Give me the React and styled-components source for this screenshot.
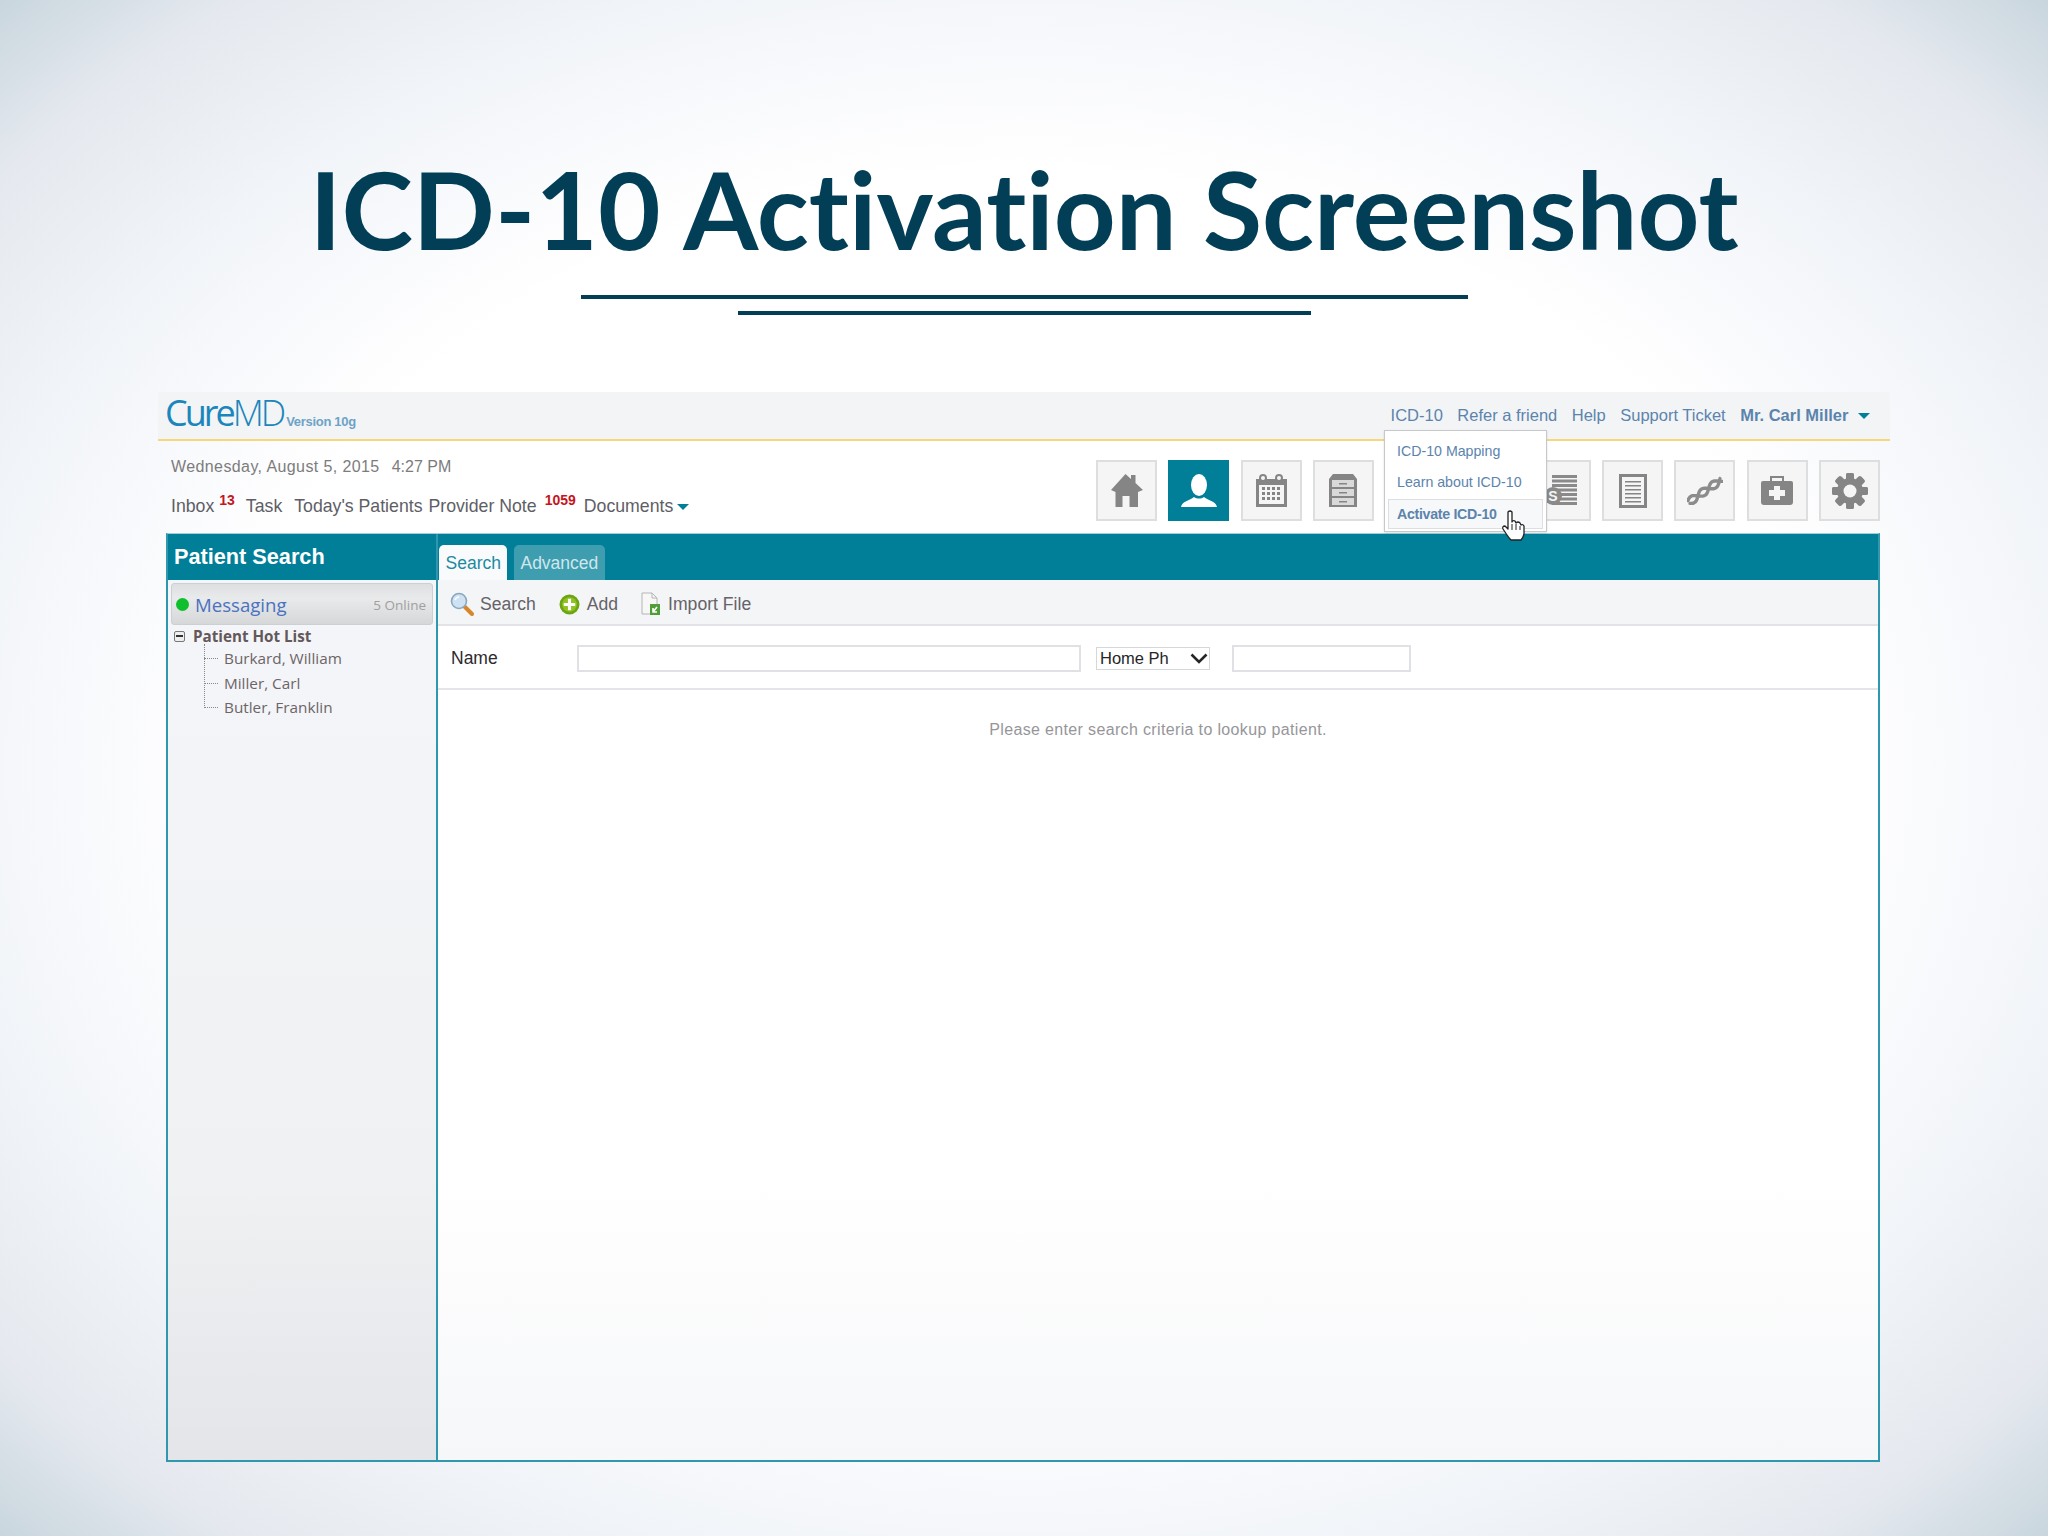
import React from 'react';
import styled, { createGlobalStyle } from 'styled-components';

const teal = '#027f98';
const iconGray = '#858585';
const linkBlue = '#5b84ad';

const GlobalStyle = createGlobalStyle`
    html, body {
        margin: 0;
        padding: 0;
    }
    body {
        font-family: "Liberation Sans", Arial, sans-serif;
        background: #fff;
    }
`;

const Page = styled.div`
    width: 2048px;
    height: 1536px;
    overflow: hidden;
    display: flex;
    flex-direction: column;
    background: radial-gradient(ellipse farthest-corner at 50% 50%, #ffffff 55%, #f8f9fc 66%, #eff3f7 77%, #e5e9ef 89%, #c9d6de 100%);
`;

const Title = styled.h1`
    margin: 0;
    padding: 143px 0 0 0;
    height: 133px;
    text-align: center;
    font-family: Lato, sans-serif;
    font-weight: 700;
    font-size: 108px;
    line-height: 130px;
    font-variant-ligatures: none;
    color: #023e56;
`;

const Rules = styled.div`
    display: flex;
    flex-direction: column;
    align-items: center;
    gap: 12px;
    margin-top: 19px;
`;

const Rule = styled.div`
    width: ${props => props.$width}px;
    height: 4px;
    background: #023e56;
`;

const Frame = styled.div`
    position: relative;
    width: 1732px;
    height: 1070px;
    margin: 77px 0 0 158px;
    display: flex;
    flex-direction: column;
`;

const TopStrip = styled.div`
    height: 47px;
    flex: none;
    display: flex;
    align-items: center;
    justify-content: space-between;
    padding: 0 20px 0 7px;
    background: #f3f4f6;
    border-bottom: 2px solid #f6d77c;
`;

const Logo = styled.div`
    display: flex;
    align-items: baseline;
    padding-top: 2px;
    color: #1b86bc;
    font-family: "Open Sans", sans-serif;
    font-size: 36px;
    line-height: 47px;
    letter-spacing: -3px;
`;

const LogoBold = styled.span`
    font-weight: 500;
`;

const LogoThin = styled.span`
    font-weight: 300;
    letter-spacing: -3px;
`;

const LogoVersion = styled.span`
    margin-left: 3px;
    font-family: "Liberation Sans", sans-serif;
    font-size: 13px;
    letter-spacing: -0.3px;
    font-weight: 700;
    color: #6da3c6;
`;

const TopLinks = styled.div`
    display: flex;
    align-items: center;
    gap: 14.5px;
    font-size: 16.5px;
    color: ${linkBlue};
`;

const TopLink = styled.span`
    font-weight: ${props => (props.$bold ? 700 : 400)};
`;

const Caret = styled.span`
    display: inline-block;
    width: 0;
    height: 0;
    margin-left: ${props => props.$gap ?? 0}px;
    border-left: 6px solid transparent;
    border-right: 6px solid transparent;
    border-top: 6px solid ${teal};
    vertical-align: 2px;
`;

const InfoRow = styled.div`
    height: 92px;
    flex: none;
    display: flex;
    justify-content: space-between;
    padding: 0 10px 0 13px;
`;

const InfoLeft = styled.div`
    display: flex;
    flex-direction: column;
    padding-top: 16px;
`;

const DateLine = styled.div`
    display: flex;
    gap: 12px;
    font-size: 16px;
    line-height: 20px;
    color: #7c7c7c;
`;

const DatePart = styled.span`
    letter-spacing: 0.4px;
`;

const NavLine = styled.div`
    display: flex;
    align-items: baseline;
    margin-top: 18px;
    font-size: 17.7px;
    line-height: 22px;
    color: #5e5e66;
`;

const NavItem = styled.span`
    margin-right: ${props => props.$gap ?? 6}px;
`;

const Count = styled.span`
    align-self: flex-start;
    margin: -3px ${props => props.$after}px 0 ${props => props.$before}px;
    font-size: 14px;
    font-weight: 700;
    line-height: 16px;
    color: #c4161c;
`;

const IconRow = styled.div`
    display: flex;
    gap: 11.3px;
    padding-top: 19px;
`;

const IconBox = styled.div`
    width: 61px;
    height: 61px;
    box-sizing: border-box;
    display: flex;
    align-items: center;
    justify-content: center;
    background: ${props => (props.$active ? teal : '#f5f5f6')};
    border: 2px solid ${props => (props.$active ? teal : '#dddee0')};
`;

const Panel = styled.div`
    flex: none;
    margin: 0 10px 0 8px;
    height: 929px;
    box-sizing: border-box;
    display: grid;
    grid-template-columns: 270px 1fr;
    border: 2px solid #2f97ae;
    border-top: 1px solid #9fd0dc;
    background: #fff;
`;

const Sidebar = styled.div`
    display: flex;
    flex-direction: column;
    border-right: 2px solid #2f97ae;
    background: linear-gradient(180deg, #f4f6f9 0%, #f0f1f3 70%, #e3e5e8 100%);
`;

const SideTitle = styled.div`
    height: 46px;
    flex: none;
    padding-left: 6px;
    background: ${teal};
    color: #fff;
    font-size: 21.7px;
    font-weight: 700;
    line-height: 46px;
`;

const Messaging = styled.div`
    height: 42px;
    flex: none;
    margin: 3px 3px 0 3px;
    padding: 1px 6px 0 4px;
    display: flex;
    align-items: center;
    border-radius: 3px;
    background: linear-gradient(180deg, #dddfe0 0%, #e9eaeb 35%, #d5d7d8 100%);
    border: 1px solid #cdd0d2;
    box-sizing: border-box;
`;

const Dot = styled.span`
    width: 13px;
    height: 13px;
    border-radius: 50%;
    background: #0fbf2c;
`;

const MessagingLabel = styled.span`
    margin-left: 6px;
    flex: 1;
    font-family: "Open Sans", sans-serif;
    font-size: 18.6px;
    color: #4a72c0;
`;

const OnlineCount = styled.span`
    font-family: "Open Sans", sans-serif;
    font-size: 13.5px;
    color: #a0a0a0;
`;

const TreeRoot = styled.div`
    position: relative;
    margin-top: 1px;
    padding-left: 25px;
    font-family: "Open Sans", sans-serif;
    font-weight: 700;
    font-size: 15.2px;
    line-height: 21px;
    color: #63585a;
`;

const TreeToggle = styled.span`
    position: absolute;
    left: 6px;
    top: 5px;
    width: 11px;
    height: 11px;
    box-sizing: border-box;
    border: 1px solid #777;
    border-radius: 2px;
    background: #eee;
    &::after {
        content: '';
        position: absolute;
        left: 1px;
        right: 1px;
        top: 3px;
        height: 2px;
        background: #333;
    }
`;

const TreeList = styled.div`
    position: relative;
    display: flex;
    flex-direction: column;
    margin: -1px 0 0 36px;
    padding-left: 20px;
    &::before {
        content: '';
        position: absolute;
        left: 0;
        top: -2px;
        bottom: 12px;
        border-left: 1px dotted #888;
    }
`;

const TreeItem = styled.div`
    position: relative;
    height: 24.5px;
    font-family: "Open Sans", sans-serif;
    font-size: 15.3px;
    line-height: 24px;
    color: #6c6468;
    &::before {
        content: '';
        position: absolute;
        left: -20px;
        top: 12px;
        width: 14px;
        border-top: 1px dotted #888;
    }
`;

const Main = styled.div`
    display: flex;
    flex-direction: column;
    background: linear-gradient(180deg, #ffffff 0%, #ffffff 70%, #f6f7f9 100%);
`;

const TabBar = styled.div`
    height: 46px;
    flex: none;
    display: flex;
    align-items: flex-end;
    gap: 6.5px;
    padding-left: 1px;
    background: ${teal};
`;

const Tab = styled.div`
    height: 35px;
    padding: 0 6.5px;
    border-radius: 5px 5px 0 0;
    font-size: 17.5px;
    line-height: 37px;
    color: ${props => (props.$active ? '#1d8aa2' : '#cfe7ec')};
    background: ${props => (props.$active ? '#f8fafb' : '#3f9db0')};
`;

const Toolbar = styled.div`
    height: 46px;
    flex: none;
    box-sizing: border-box;
    display: flex;
    align-items: center;
    padding: 4px 0 0 12px;
    background: #f3f5f7;
    border-bottom: 2px solid #e1e3e6;
`;

const ToolButton = styled.div`
    display: flex;
    align-items: center;
    gap: ${props => props.$gap ?? 7}px;
    margin-right: 23px;
    font-size: 17.6px;
    color: #666269;
`;

const FormRow = styled.div`
    height: 64px;
    flex: none;
    box-sizing: border-box;
    display: flex;
    align-items: center;
    padding: 3px 0 0 13px;
    border-bottom: 2px solid #e4e5e8;
`;

const FieldLabel = styled.label`
    width: 126px;
    font-size: 17.5px;
    color: #2d2a30;
`;

const TextField = styled.input`
    width: ${props => props.$width}px;
    height: 27px;
    padding: 0;
    box-sizing: border-box;
    background: #fff;
    border: 2px solid #e0e1e4;
`;

const PhoneSelect = styled.div`
    width: 114px;
    height: 23px;
    margin: 0 22px 0 15px;
    padding: 0 1px 0 3px;
    box-sizing: border-box;
    display: flex;
    align-items: center;
    justify-content: space-between;
    font-size: 16.5px;
    color: #26262a;
    border: 1px solid #d6d7da;
    background: #fff;
`;

const Hint = styled.div`
    margin-top: 30px;
    text-align: center;
    font-size: 16px;
    line-height: 20px;
    color: #96969a;
    letter-spacing: 0.35px;
`;

const Dropdown = styled.div`
    position: absolute;
    left: 1226px;
    top: 38px;
    width: 163px;
    height: 102px;
    box-sizing: border-box;
    padding: 5px 3px 4px;
    display: flex;
    flex-direction: column;
    background: #fff;
    border: 1px solid #c6c8cb;
    box-shadow: 0 1px 2px rgba(0, 0, 0, 0.12);
`;

const DropItem = styled.div`
    flex: none;
    height: ${props => (props.$hover ? 30 : 31)}px;
    margin-top: ${props => (props.$hover ? 1 : 0)}px;
    padding-left: ${props => (props.$hover ? 8 : 9)}px;
    box-sizing: border-box;
    font-size: 14.2px;
    letter-spacing: ${props => (props.$hover ? -0.3 : 0)}px;
    line-height: ${props => (props.$hover ? 28 : 31)}px;
    font-weight: ${props => (props.$hover ? 700 : 400)};
    color: ${linkBlue};
    background: ${props => (props.$hover ? '#f7f8f9' : 'transparent')};
    border: ${props => (props.$hover ? '1px solid #dcdee0' : '0')};
`;

const HandCursor = styled.svg`
    position: absolute;
    left: 1344px;
    top: 118px;
`;

const HomeIcon = () => (
    <svg width="32" height="33" viewBox="0 0 32 33">
        <path fill={iconGray} d="M14.5 0 L20 5 V1 H24.5 V9 L32 16 L27 18 V33 H18.5 V22 H11.5 V33 H4.5 V18 L0 16 Z" />
    </svg>
);

const PersonIcon = () => (
    <svg width="36" height="34" viewBox="0 0 36 34">
        <ellipse cx="18" cy="11" rx="8" ry="11" fill="#fff" />
        <path fill="#fff" d="M0 33 C1 27 10 26 13 23 C16 25 20 25 23 23 C26 26 35 27 36 33 Z" />
    </svg>
);

const CalendarIcon = () => (
    <svg width="32" height="34" viewBox="0 0 32 34">
        <path fill={iconGray} d="M1 5 H32 V33 H1 Z" />
        <rect x="4" y="11" width="25" height="19" fill="#f5f5f6" />
        <circle cx="8" cy="4" r="3" fill="#f5f5f6" stroke={iconGray} strokeWidth="2" />
        <circle cx="24" cy="4" r="3" fill="#f5f5f6" stroke={iconGray} strokeWidth="2" />
        {[13, 18, 23].map(y => [7, 12, 17, 22].map(x => (
            <rect key={`${x}-${y}`} x={x} y={y} width="3" height="3" fill={iconGray} />
        )))}
    </svg>
);

const CabinetIcon = () => (
    <svg width="28" height="34" viewBox="0 0 28 34">
        <path fill={iconGray} d="M4 0 H24 L28 5 V33 H0 V5 Z" />
        <path fill="#d9d9da" d="M3 6 H25 V13 H3 Z M3 15 H25 V22 H3 Z M3 24 H25 V31 H3 Z" />
        <path fill={iconGray} d="M10 9 H18 V10.5 H10 Z M10 18 H18 V19.5 H10 Z M10 27 H18 V28.5 H10 Z" />
    </svg>
);

const BillingIcon = () => (
    <svg width="33" height="31" viewBox="0 0 33 31">
        {[0, 4.5, 9, 13.5, 18, 22.5, 27].map(y => (
            <rect key={y} x="8" y={y} width="25" height="3" fill="#8a8a8a" />
        ))}
        <circle cx="9" cy="21" r="9" fill="#8a8a8a" />
        <text x="9" y="26" textAnchor="middle" fontSize="14" fontWeight="700" fontFamily="Liberation Sans" fill="#f5f5f6">S</text>
    </svg>
);

const NoteIcon = () => (
    <svg width="28" height="34" viewBox="0 0 28 34">
        <rect x="1.5" y="1.5" width="25" height="31" fill="#f5f5f6" stroke={iconGray} strokeWidth="3" />
        {[7, 11, 15, 19, 23, 27].map(y => (
            <rect key={y} x="6" y={y} width="16" height="1.5" fill={iconGray} />
        ))}
    </svg>
);

// two sine strands running along the diagonal of the icon
const helixStrand = phase => {
    const points = [];
    for (let i = 0; i <= 32; i += 1) {
        const t = i / 32;
        const offset = 3.6 * Math.sin(Math.PI * 3 * t + phase);
        const x = 2 + 32 * t + 0.566 * offset;
        const y = 26 - 22 * t + 0.824 * offset;
        points.push(`${x.toFixed(1)},${y.toFixed(1)}`);
    }
    return points.join(' ');
};

const DnaIcon = () => (
    <svg width="36" height="30" viewBox="0 0 36 30">
        <g fill="none" stroke="#8c8c8c" strokeWidth="3.4" strokeLinecap="round" strokeLinejoin="round">
            <polyline points={helixStrand(0.5)} />
            <polyline points={helixStrand(0.5 + Math.PI)} />
        </g>
    </svg>
);

const BriefcaseIcon = () => (
    <svg width="32" height="32" viewBox="0 0 32 32">
        <path fill="none" stroke={iconGray} strokeWidth="2" d="M10 6 V2 H22 V6" />
        <path fill={iconGray} d="M2 6 H30 Q32 6 32 8 V27 Q32 30 29 30 H3 Q0 30 0 27 V8 Q0 6 2 6 Z" />
        <path fill="#f5f5f6" d="M13 11 H19 V15 H24 V21 H19 V25 H13 V21 H8 V15 H13 Z" />
    </svg>
);

const GearIcon = () => (
    <svg width="36" height="36" viewBox="0 0 36 36">
        <g fill={iconGray}>
            {[0, 45, 90, 135, 180, 225, 270, 315].map(a => (
                <rect key={a} x="14" y="0" width="8" height="36" rx="2" transform={`rotate(${a} 18 18)`} />
            ))}
            <circle cx="18" cy="18" r="13" />
        </g>
        <circle cx="18" cy="18" r="6.5" fill="#f5f5f6" />
    </svg>
);

const SearchGlass = () => (
    <svg width="24" height="24" viewBox="0 0 24 24">
        <path stroke="#d9862a" strokeWidth="4" strokeLinecap="round" d="M15 15 L22 22" />
        <circle cx="9" cy="9" r="7.5" fill="#cfe2f3" stroke="#8aa7c2" strokeWidth="1.6" />
        <path stroke="#fff" strokeWidth="1.5" fill="none" d="M5 8 Q6 5 9 5" />
    </svg>
);

const AddIcon = () => (
    <svg width="21" height="21" viewBox="0 0 20 20">
        <circle cx="10" cy="10" r="9.5" fill="#6ea414" />
        <circle cx="10" cy="10" r="7" fill="#8fc31f" />
        <path stroke="#fff" strokeWidth="3" d="M10 4.5 V15.5 M4.5 10 H15.5" />
    </svg>
);

const ImportIcon = () => (
    <svg width="20" height="24" viewBox="0 0 20 24">
        <path fill="#f7f7f7" stroke="#b5b5b5" d="M1 1 H11 L16 6 V22 H1 Z" />
        <path fill="none" stroke="#b5b5b5" d="M11 1 V6 H16" />
        <rect x="9" y="12" width="10" height="11" fill="#4f9e3a" />
        <path stroke="#fff" strokeWidth="1.6" fill="none" d="M16 15 L12 20 M12 16 V20 H16" />
    </svg>
);

const Chevron = () => (
    <svg width="18" height="11" viewBox="0 0 18 11">
        <path fill="none" stroke="#26262a" strokeWidth="2.6" d="M1.5 1.5 L9 9 L16.5 1.5" />
    </svg>
);

const navIcons = [
    { key: 'home', icon: <HomeIcon /> },
    { key: 'patient', icon: <PersonIcon />, active: true },
    { key: 'calendar', icon: <CalendarIcon /> },
    { key: 'cabinet', icon: <CabinetIcon /> },
    { key: 'hidden-a', icon: null },
    { key: 'hidden-b', icon: null },
    { key: 'billing', icon: <BillingIcon /> },
    { key: 'note', icon: <NoteIcon /> },
    { key: 'dna', icon: <DnaIcon /> },
    { key: 'case', icon: <BriefcaseIcon /> },
    { key: 'gear', icon: <GearIcon /> },
];

const hotList = ['Burkard, William', 'Miller, Carl', 'Butler, Franklin'];

const App = () => {
    return (
        <Page>
            <GlobalStyle />
            <Title>ICD-10 Activation Screenshot</Title>
            <Rules>
                <Rule $width={887} />
                <Rule $width={573} />
            </Rules>
            <Frame>
                <TopStrip>
                    <Logo>
                        <LogoBold>Cure</LogoBold>
                        <LogoThin>MD</LogoThin>
                        <LogoVersion>Version 10g</LogoVersion>
                    </Logo>
                    <TopLinks>
                        <TopLink>ICD-10</TopLink>
                        <TopLink>Refer a friend</TopLink>
                        <TopLink>Help</TopLink>
                        <TopLink>Support Ticket</TopLink>
                        <TopLink $bold>Mr. Carl Miller <Caret $gap={5} /></TopLink>
                    </TopLinks>
                </TopStrip>
                <InfoRow>
                    <InfoLeft>
                        <DateLine>
                            <DatePart>Wednesday, August 5, 2015</DatePart>
                            <span>4:27 PM</span>
                        </DateLine>
                        <NavLine>
                            <NavItem $gap={0}>Inbox</NavItem>
                            <Count $before={5} $after={11}>13</Count>
                            <NavItem $gap={12}>Task</NavItem>
                            <NavItem>Today's Patients</NavItem>
                            <NavItem $gap={0}>Provider Note</NavItem>
                            <Count $before={8} $after={8}>1059</Count>
                            <NavItem $gap={0}>Documents <Caret $gap={-1} /></NavItem>
                        </NavLine>
                    </InfoLeft>
                    <IconRow>
                        {navIcons.map(item => (
                            <IconBox key={item.key} $active={item.active}>{item.icon}</IconBox>
                        ))}
                    </IconRow>
                </InfoRow>
                <Panel>
                    <Sidebar>
                        <SideTitle>Patient Search</SideTitle>
                        <Messaging>
                            <Dot />
                            <MessagingLabel>Messaging</MessagingLabel>
                            <OnlineCount>5 Online</OnlineCount>
                        </Messaging>
                        <TreeRoot>
                            <TreeToggle />
                            Patient Hot List
                        </TreeRoot>
                        <TreeList>
                            {hotList.map(name => (
                                <TreeItem key={name}>{name}</TreeItem>
                            ))}
                        </TreeList>
                    </Sidebar>
                    <Main>
                        <TabBar>
                            <Tab $active>Search</Tab>
                            <Tab>Advanced</Tab>
                        </TabBar>
                        <Toolbar>
                            <ToolButton $gap={6}><SearchGlass />Search</ToolButton>
                            <ToolButton><AddIcon />Add</ToolButton>
                            <ToolButton><ImportIcon />Import File</ToolButton>
                        </Toolbar>
                        <FormRow>
                            <FieldLabel>Name</FieldLabel>
                            <TextField $width={504} />
                            <PhoneSelect>Home Ph <Chevron /></PhoneSelect>
                            <TextField $width={179} />
                        </FormRow>
                        <Hint>Please enter search criteria to lookup patient.</Hint>
                    </Main>
                </Panel>
                <Dropdown>
                    <DropItem>ICD-10 Mapping</DropItem>
                    <DropItem>Learn about ICD-10</DropItem>
                    <DropItem $hover>Activate ICD-10</DropItem>
                </Dropdown>
                <HandCursor width="24" height="32" viewBox="0 0 24 32">
                    <path fill="#fff" stroke="#222" strokeWidth="1.3" strokeLinejoin="round" d="M6 2 Q8 0 10 2 V12 Q11 10 13 11 L14 13 Q16 11 18 13 L19 15 Q21 14 22 16 V24 Q21 28 19 30 H9 Q7 28 5 25 L1 19 Q0 16 3 16 L6 19 Z" />
                    <path stroke="#222" strokeWidth="1" d="M10 14 V20 M14 14 V20 M18 16 V20" />
                </HandCursor>
            </Frame>
        </Page>
    );
};

export default App;
